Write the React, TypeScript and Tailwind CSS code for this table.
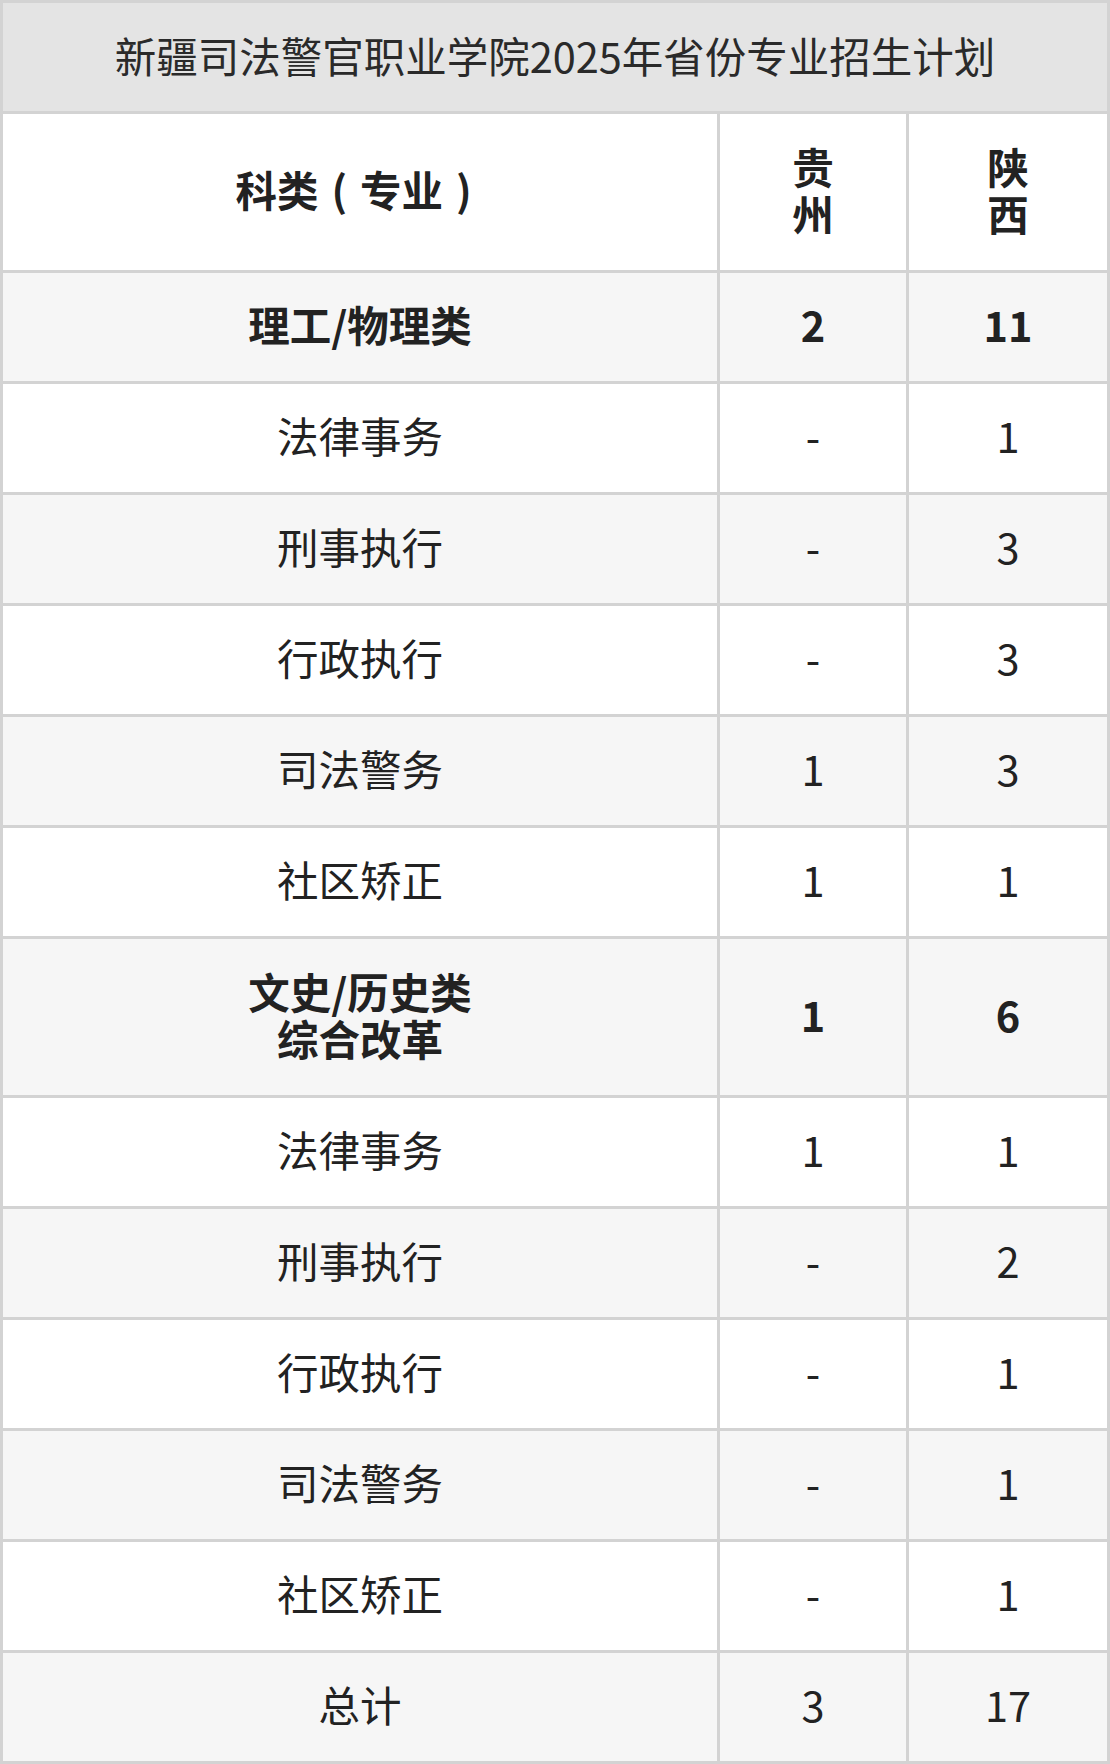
import React from 'react'

// Rows of the plan: bold = group header row
const rows = [
  { label: ['理工/物理类'], gz: '2', sx: '11', bold: true },
  { label: ['法律事务'], gz: '-', sx: '1' },
  { label: ['刑事执行'], gz: '-', sx: '3' },
  { label: ['行政执行'], gz: '-', sx: '3' },
  { label: ['司法警务'], gz: '1', sx: '3' },
  { label: ['社区矫正'], gz: '1', sx: '1' },
  { label: ['文史/历史类', '综合改革'], gz: '1', sx: '6', bold: true },
  { label: ['法律事务'], gz: '1', sx: '1' },
  { label: ['刑事执行'], gz: '-', sx: '2' },
  { label: ['行政执行'], gz: '-', sx: '1' },
  { label: ['司法警务'], gz: '-', sx: '1' },
  { label: ['社区矫正'], gz: '-', sx: '1' },
  { label: ['总计'], gz: '3', sx: '17' },
]

function Cell({ children, bg, bold, tall }: { children: React.ReactNode; bg: string; bold?: boolean; tall?: boolean }) {
  return (
    <div
      className={`flex items-center justify-center pb-[5px] text-center leading-[47px] ${tall ? 'h-[156px]' : 'h-[108px]'} ${bold ? 'font-bold' : 'font-normal'} ${bg}`}
    >
      <div>{children}</div>
    </div>
  )
}

export default function App() {
  return (
    <div
      className="w-[1110px] bg-[#d3d3d3] p-[3px] text-[41.5px] text-[#222222]"
      style={{ fontFamily: '"Noto Sans CJK SC", "Noto Sans", sans-serif' }}
    >
      <div className="grid grid-cols-[714px_186px_198px] gap-[3px]">
        <div className="col-span-3 flex h-[108px] items-center justify-center bg-[#e4e4e4] pb-[3px] text-[#2a2a2a]">
          新疆司法警官职业学院2025年省份专业招生计划
        </div>

        <Cell bg="bg-white" bold tall>
          科类<span className="inline-block w-[1em] text-center">(</span>专业<span className="inline-block w-[1em] text-center">)</span>
        </Cell>
        <Cell bg="bg-white" bold tall>贵<br />州</Cell>
        <Cell bg="bg-white" bold tall>陕<br />西</Cell>

        {rows.map((r, i) => {
          const bg = i % 2 === 0 ? 'bg-[#f6f6f6]' : 'bg-white'
          const tall = r.label.length > 1
          return (
            <React.Fragment key={i}>
              <Cell bg={bg} bold={r.bold} tall={tall}>
                {r.label.map((l, j) => (
                  <div key={j}>{l}</div>
                ))}
              </Cell>
              <Cell bg={bg} bold={r.bold} tall={tall}>{r.gz}</Cell>
              <Cell bg={bg} bold={r.bold} tall={tall}>{r.sx}</Cell>
            </React.Fragment>
          )
        })}
      </div>
    </div>
  )
}
